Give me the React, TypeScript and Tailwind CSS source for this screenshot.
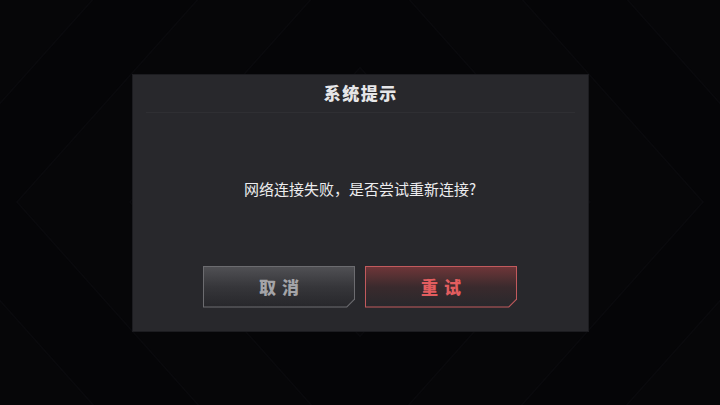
import React from "react";

const chamfer = "polygon(0 0, 100% 0, 100% calc(100% - 8px), calc(100% - 8px) 100%, 0 100%)";

function Button({ label, variant }: { label: string; variant: "cancel" | "retry" }) {
  const isRetry = variant === "retry";
  return (
    <div
      className={`w-[152px] h-[42px] p-px ${isRetry ? "bg-[#c25a5d]" : "bg-[#6c6c70]"}`}
      style={{ clipPath: chamfer }}
    >
      <div
        className={`w-full h-full flex items-center justify-center ${
          isRetry
            ? "bg-gradient-to-b from-[#6e3538] via-[#3a2a2d] to-[#28282c]"
            : "bg-gradient-to-b from-[#505054] via-[#36363a] to-[#27272b]"
        }`}
        style={{ clipPath: "polygon(0 0, 100% 0, 100% calc(100% - 7.5px), calc(100% - 7.5px) 100%, 0 100%)" }}
      >
        <span
          className={`text-[17px] font-black tracking-[6px] pl-[6px] ${isRetry ? "text-[#e25d5f]" : "text-[#a4a4a8]"}`}
        >
          {label}
        </span>
      </div>
    </div>
  );
}

export default function App() {
  const diamonds = [120, 230, 343, 448, 560];
  return (
    <div
      className="relative w-[720px] h-[405px] overflow-hidden bg-[#050507] flex items-center justify-center"
      style={{ fontFamily: '"Noto Sans CJK SC", "Noto Sans", sans-serif' }}
    >
      <svg className="absolute inset-0" width="720" height="405" viewBox="0 0 720 405">
        {diamonds
          .map((r, i) => (
            <polygon
              key={r}
              points={`360,${202 - r * 1.12} ${360 + r},202 360,${202 + r * 1.12} ${360 - r},202`}
              fill={i % 2 === 0 ? "#060608" : "#050507"}
              stroke="#0a0a0d"
              strokeWidth="1.5"
            />
          ))
          .reverse()}
      </svg>
      <div className="relative w-[455px] h-[256px] bg-[#28282c] flex flex-col shadow-[0_0_0_1px_#1c1c20]">
        <div className="h-[37px] flex items-center justify-center">
          <span className="text-[17px] font-black text-[#e6e6e8] tracking-[1.5px] pl-[1.5px]">系统提示</span>
        </div>
        <div className="mx-[13px] h-px bg-[#2f2f33]" />
        <div className="flex-1 flex items-center justify-center">
          <span className="text-[15px] text-[#ececee]">网络连接失败，是否尝试重新连接?</span>
        </div>
        <div className="flex justify-center gap-[10px] pb-[23px]">
          <Button label="取消" variant="cancel" />
          <Button label="重试" variant="retry" />
        </div>
      </div>
    </div>
  );
}
